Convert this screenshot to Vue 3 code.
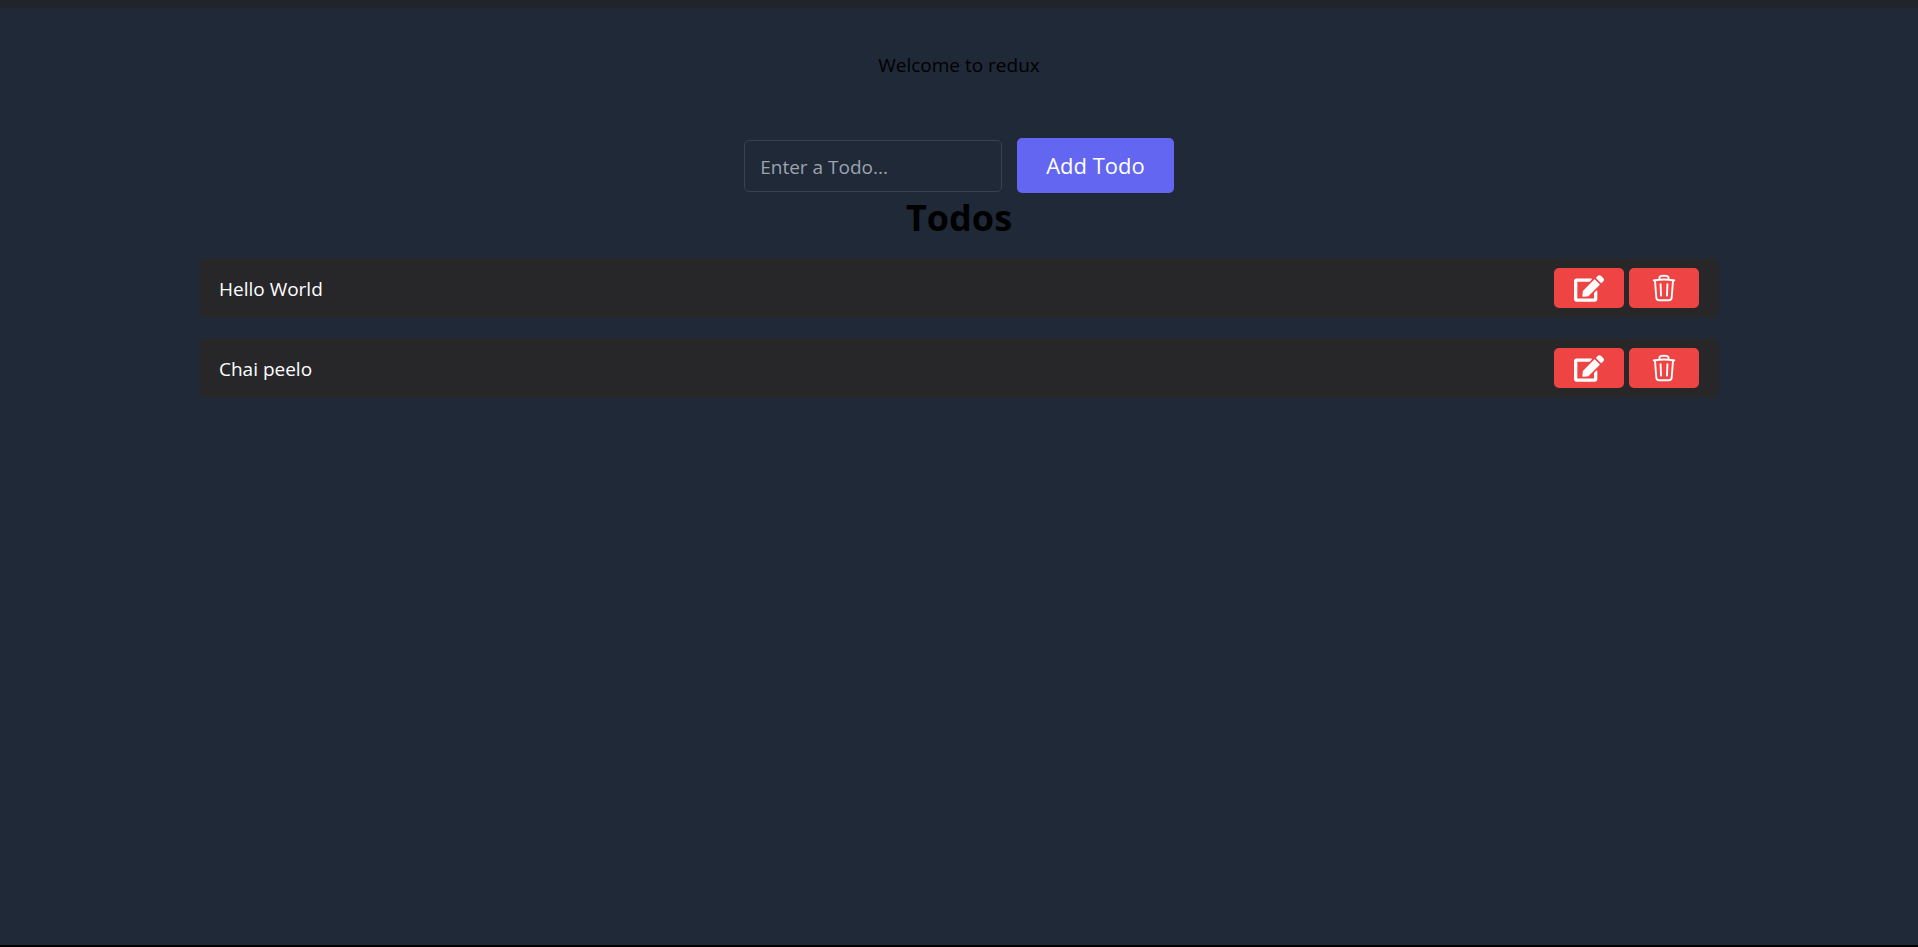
<script setup>
import { ref } from 'vue'

const draft = ref('')
const todos = ref([
  { id: 1, text: 'Hello World' },
  { id: 2, text: 'Chai peelo' },
])
let nextId = 3
const editingId = ref(null)

function save() {
  const text = draft.value.trim()
  if (!text) return
  const current = todos.value.find((t) => t.id === editingId.value)
  if (current) current.text = text
  else todos.value.push({ id: nextId++, text })
  editingId.value = null
  draft.value = ''
}

function edit(todo) {
  editingId.value = todo.id
  draft.value = todo.text
}

function remove(id) {
  todos.value = todos.value.filter((t) => t.id !== id)
}
</script>

<template>
  <div class="page">
    <main class="content">
      <p class="welcome">Welcome to redux</p>
      <form class="add-form" @submit.prevent="save">
        <input v-model="draft" class="field" type="text" aria-label="Todo" placeholder="Enter a Todo..." />
        <button class="add" type="submit">Add Todo</button>
      </form>
      <h1 class="title">Todos</h1>
      <ul class="list">
        <li v-for="todo in todos" :key="todo.id" class="item">
          <span class="text">{{ todo.text }}</span>
          <div class="actions">
            <button class="action" type="button" aria-label="Edit" @click="edit(todo)">
              <svg class="edit-icon" viewBox="0 0 576 512" fill="currentColor" aria-hidden="true">
                <path d="M402.6 83.2l90.2 90.2c3.8 3.8 3.8 10 0 13.8L274.4 405.6l-92.8 10.3c-12.4 1.4-22.9-9.1-21.5-21.5l10.3-92.8L388.8 83.2c3.8-3.8 10-3.8 13.8 0zm162-22.9l-48.8-48.8c-15.2-15.2-39.9-15.2-55.2 0l-35.4 35.4c-3.8 3.8-3.8 10 0 13.8l90.2 90.2c3.8 3.8 10 3.8 13.8 0l35.4-35.4c15.2-15.3 15.2-40 0-55.2zM384 346.2V448H64V128h229.8c3.2 0 6.2-1.3 8.5-3.5l40-40c7.6-7.6 2.2-20.5-8.5-20.5H48C21.5 64 0 85.5 0 112v352c0 26.5 21.5 48 48 48h352c26.5 0 48-21.5 48-48V306.2c0-10.7-12.9-16-20.5-8.5l-40 40c-2.2 2.3-3.5 5.3-3.5 8.5z" />
              </svg>
            </button>
            <button class="action" type="button" aria-label="Delete" @click="remove(todo.id)">
              <svg class="trash-icon" viewBox="0 0 24 24" fill="none" stroke="currentColor" stroke-width="1.5" stroke-linecap="round" stroke-linejoin="round" aria-hidden="true">
                <path d="M14.74 9l-.346 9m-4.788 0L9.26 9m9.968-3.21c.342.052.682.107 1.022.166m-1.022-.165L18.16 19.673a2.25 2.25 0 01-2.244 2.077H8.084a2.25 2.25 0 01-2.244-2.077L4.772 5.79m14.456 0a48.108 48.108 0 00-3.478-.397m-12 .562c.34-.059.68-.114 1.022-.165m0 0a48.11 48.11 0 013.478-.397m7.5 0v-.916c0-1.18-.91-2.164-2.09-2.201a51.964 51.964 0 00-3.32 0c-1.18.037-2.09 1.022-2.09 2.201v.916m7.5 0a48.667 48.667 0 00-7.5 0" />
              </svg>
            </button>
          </div>
        </li>
      </ul>
    </main>
  </div>
</template>

<style>
body {
  margin: 0;
  background: #1f2937;
}
</style>

<style scoped>
.page {
  box-sizing: border-box;
  min-height: 100vh;
  border-top: 8px solid #22242b;
  border-bottom: 2px solid #000;
  background: #1f2937;
  color: #000;
  font-family: "Segoe UI", "Open Sans", "Noto Sans", sans-serif;
  font-size: 19px;
  line-height: 30px;
}

.content {
  padding: 42px 199px;
  text-align: center;
}

.welcome {
  margin: 0;
}

.add-form {
  display: flex;
  justify-content: center;
  align-items: center;
  gap: 15px;
  margin-top: 58px;
}

.field {
  box-sizing: border-box;
  width: 258px;
  height: 52px;
  padding: 7px 15px 5px;
  border: 1px solid #374151;
  border-radius: 5px;
  background: transparent;
  color: #f3f4f6;
  font: inherit;
  outline: none;
}

.field::placeholder {
  color: #9ca3af;
  opacity: 1;
}

.add {
  height: 55px;
  padding: 0 29px 2px;
  border: 0;
  border-radius: 5px;
  background: #6366f1;
  color: #fff;
  font: inherit;
  font-size: 22px;
  cursor: pointer;
}

.title {
  margin: 0;
  font-size: 36px;
  font-weight: 700;
  line-height: 50px;
}

.list {
  display: flex;
  flex-direction: column;
  gap: 20px;
  margin: 15px 0 0;
  padding: 0;
  list-style: none;
}

.item {
  display: flex;
  justify-content: space-between;
  align-items: center;
  padding: 10px 20px;
  border-radius: 5px;
  background: #27272a;
}

.text {
  padding-top: 2px;
  color: #fff;
}

.actions {
  display: flex;
  gap: 5px;
}

.action {
  display: flex;
  justify-content: center;
  align-items: center;
  width: 70px;
  height: 40px;
  padding: 0;
  border: 0;
  border-radius: 5px;
  background: #ef4444;
  color: #fff;
  cursor: pointer;
}

.edit-icon {
  width: 30px;
  height: 27px;
}

.trash-icon {
  width: 30px;
  height: 30px;
}
</style>
